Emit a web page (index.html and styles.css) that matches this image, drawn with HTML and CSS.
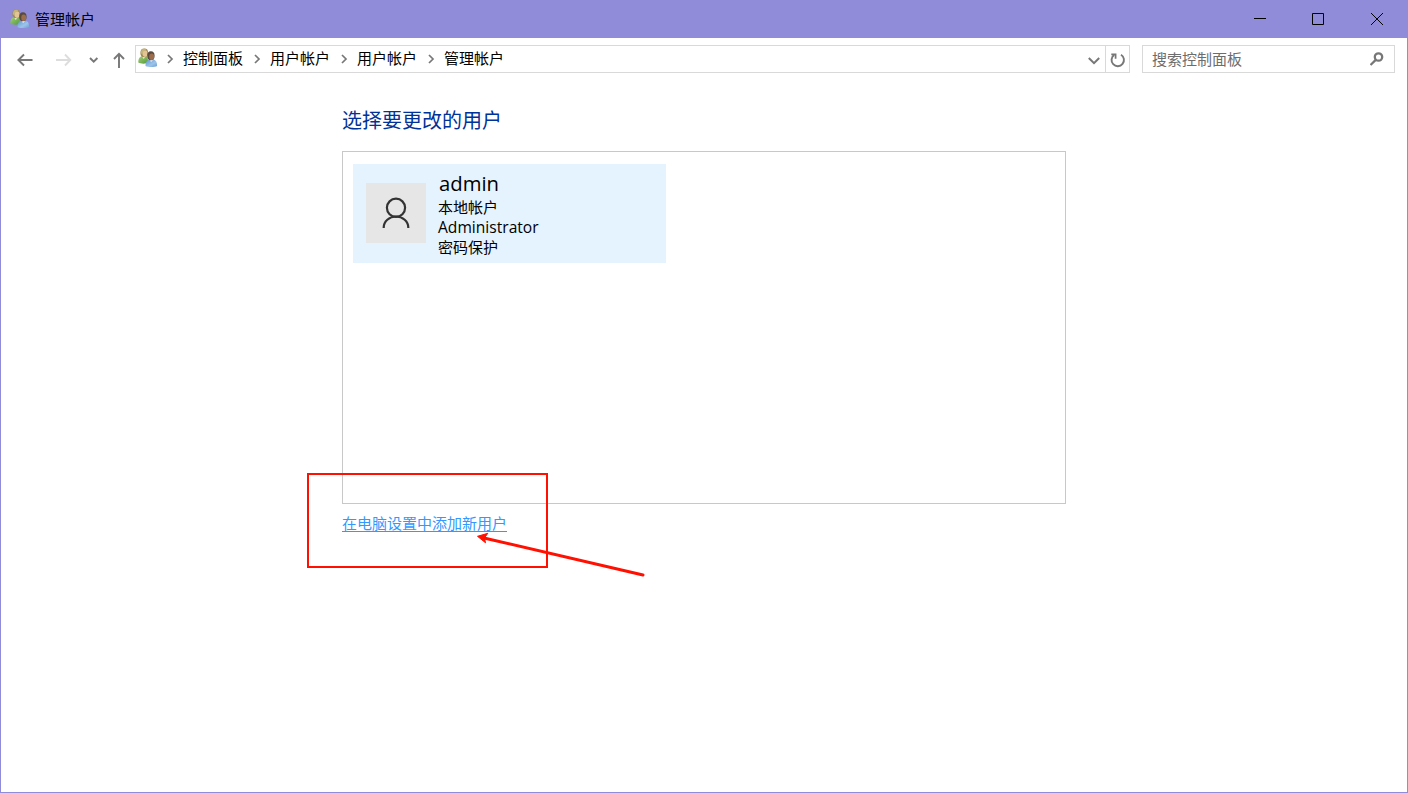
FILE: index.html
```html
<!DOCTYPE html>
<html lang="zh-CN">
<head>
<meta charset="utf-8">
<title>管理帐户</title>
<link rel="stylesheet" href="styles.css">
</head>
<body>
<svg width="0" height="0" class="defs">
  <defs>
    <linearGradient id="green" x1="0" y1="0" x2="1" y2="1"><stop offset="0" stop-color="#a5cf7c"/><stop offset="1" stop-color="#4f9a35"/></linearGradient>
    <linearGradient id="blue" x1="0" y1="0" x2="1" y2="1"><stop offset="0" stop-color="#5f93cc"/><stop offset=".6" stop-color="#9cc4ea"/><stop offset="1" stop-color="#6b9fd0"/></linearGradient>
    <symbol id="users" viewBox="0 0 20 20">
      <path d="M.3 14.600C.3 10.400 2 8.400 4.500 8l4.500.3 1.700 6.300c-2 1.300-8 1.500-10.400 0z" fill="url(#green)"/>
      <path d="M4 8.300l1.700 2.700 1.800-2.600z" fill="#eef3df"/>
      <ellipse cx="6.300" cy="4.900" rx="3.900" ry="4.300" fill="#a18a52"/>
      <ellipse cx="7" cy="5.600" rx="2.400" ry="3.300" fill="#e3c595"/>
      <path d="M2.900 5C2.900 1.500 5-.1 8.300 1.300L5.200 3.500 4.600 7z" fill="#c5b47c"/>
      <path d="M7.500 18c-.1-4.200 1.900-6.300 4.300-6.600l3.700.2c2.400.5 3.700 2.900 3.600 6.400-2.200 1.400-9.400 1.400-11.600 0z" fill="url(#blue)"/>
      <path d="M11.700 11.600l1.300 2.700 2.100-2.600z" fill="#e5f1fb"/>
      <ellipse cx="12.900" cy="7.700" rx="3.700" ry="4.500" fill="#5a4a3e"/>
      <ellipse cx="13.700" cy="8.800" rx="2.400" ry="3.300" fill="#9c6e4c"/>
    </symbol>
  </defs>
</svg>
<div class="window">
  <header class="titlebar">
    <svg class="app-icon" width="20" height="20"><use href="#users"/></svg>
    <span class="title">管理帐户</span>
    <div class="controls">
      <svg class="control" width="58" height="37"><path d="M23 17.500h12"/></svg>
      <svg class="control" width="59" height="37"><path d="M23.500 12.500h11v11h-11z"/></svg>
      <svg class="control" width="59" height="37"><path d="M23 12l12 12M35 12L23 24"/></svg>
    </div>
  </header>
  <nav class="toolbar">
    <svg class="history" width="134" height="44">
      <path d="M17.500 23h14M23 17.500L17.400 23l5.600 5.500"/>
      <path class="disabled" d="M55 23h14M64 17.500l5.300 5.500-5.300 5.500"/>
      <path d="M89 21l3.700 3.700 3.700-3.700"/>
      <path d="M118 31V17M113 22l5-5.200 5 5.200"/>
    </svg>
    <div class="address">
      <svg class="path-icon" width="20" height="20"><use href="#users"/></svg>
      <svg class="chevron" width="7" height="10"><path d="M1 1l4 4-4 4"/></svg><span class="crumb">控制面板</span>
      <svg class="chevron" width="7" height="10"><path d="M1 1l4 4-4 4"/></svg><span class="crumb">用户帐户</span>
      <svg class="chevron" width="7" height="10"><path d="M1 1l4 4-4 4"/></svg><span class="crumb">用户帐户</span>
      <svg class="chevron" width="7" height="10"><path d="M1 1l4 4-4 4"/></svg><span class="crumb">管理帐户</span>
      <svg class="drop" width="24" height="26"><path d="M7.800 12l5.200 5.200 5.200-5.200"/></svg>
      <svg class="refresh" width="24" height="26"><path d="M15 8.700a6.200 6.200 0 1 1-6.800.2"/><path class="tip" d="M5.300 8.400h4.300v4.400"/></svg>
    </div>
    <div class="search">
      <span>搜索控制面板</span>
      <svg class="magnifier" width="14" height="14"><circle cx="8.500" cy="5" r="3.700"/><path d="M6 7.700L.5 13"/></svg>
    </div>
  </nav>
  <main class="content">
    <h1 class="heading">选择要更改的用户</h1>
    <section class="accounts">
      <div class="account">
        <svg class="avatar" width="60" height="60"><circle cx="30" cy="24.800" r="9.100"/><path d="M17.700 45v-.5a12.300 11 0 0 1 24.600 0v.5"/></svg>
        <div class="details">
          <div class="name">admin</div>
          <div class="detail">本地帐户</div>
          <div class="detail role">Administrator</div>
          <div class="detail">密码保护</div>
        </div>
      </div>
    </section>
    <a class="add-link">在电脑设置中添加新用户</a>
  </main>
</div>
<div class="highlight"></div>
<svg class="arrow" width="180" height="50"><path class="shaft" d="M14 9L173 46"/><path class="head" d="M7.500 7.300L17.800 4.300 14.500 9l1 4.800z"/></svg>
</body>
</html>
```
FILE: styles.css
```css
* { box-sizing: border-box; }
body { margin: 0; font: 15px/20px "Noto Sans CJK SC", sans-serif; color: #000; background: #fff; }
svg { display: block; flex: none; fill: none; }
.defs { position: absolute; }
.window { height: 793px; border: 1px solid #918cd9; overflow: hidden; }
.titlebar { height: 37px; background: #918cd9; display: flex; align-items: center; padding-left: 9px; }
.app-icon { margin-bottom: 2px; }
.title { margin-left: 5px; padding-bottom: 2px; }
.controls { display: flex; margin-left: auto; }
.control { stroke: #000; stroke-width: 1; }
.toolbar { height: 42px; display: flex; align-items: center; }
.history { stroke: #777; stroke-width: 1.900; }
.disabled { stroke: #ddd; }
.address { width: 995px; height: 28px; border: 1px solid #d9d9d9; display: flex; align-items: center; }
.path-icon { margin-left: 2px; margin-bottom: 2px; }
.chevron { stroke: #777; stroke-width: 1.700; margin-left: 9px; }
.crumb { margin-left: 9px; margin-right: 2px; padding-bottom: 2px; }
.drop { margin-left: auto; stroke: #777; stroke-width: 2; }
.refresh { border-left: 1px solid #d9d9d9; stroke: #777; stroke-width: 1.900; }
.tip { stroke-width: 1.700; }
.search { width: 253px; height: 28px; margin-left: 12px; border: 1px solid #d9d9d9; padding: 0 10px 0 9px; display: flex; align-items: center; justify-content: space-between; color: #6d6d6d; }
.magnifier { stroke: #777; stroke-width: 2.300; }
.content { width: 724px; margin: 24px 0 0 341px; }
.heading { margin: 0; height: 47px; font-size: 20px; line-height: 32px; font-weight: 400; color: #003399; }
.accounts { height: 353px; border: 1px solid #c8c8c8; padding: 12px 10px; }
.account { width: 313px; height: 99px; background: #e5f3ff; display: flex; padding-left: 13px; }
.avatar { margin-top: 19px; background: #e6e6e6; stroke: #333; stroke-width: 2.200; }
.details { margin-left: 12px; padding-top: 6px; }
.name { font: 400 20.300px/27px "Open Sans", sans-serif; margin-left: 1px; }
.detail { height: 20px; }
.role { font-family: "Open Sans", sans-serif; font-size: 15.600px; }
.add-link { display: inline-block; margin-top: 9px; color: #3399ff; text-decoration: underline; text-underline-offset: 2px; }
.highlight { position: absolute; left: 307px; top: 473px; width: 241px; height: 95px; border: 2px solid #ff1000; }
.arrow { position: absolute; left: 470px; top: 529px; }
.shaft { stroke: #ff1000; stroke-width: 3; stroke-linecap: round; }
.head { fill: #ff1000; stroke: #ff1000; stroke-width: 1; }
```
